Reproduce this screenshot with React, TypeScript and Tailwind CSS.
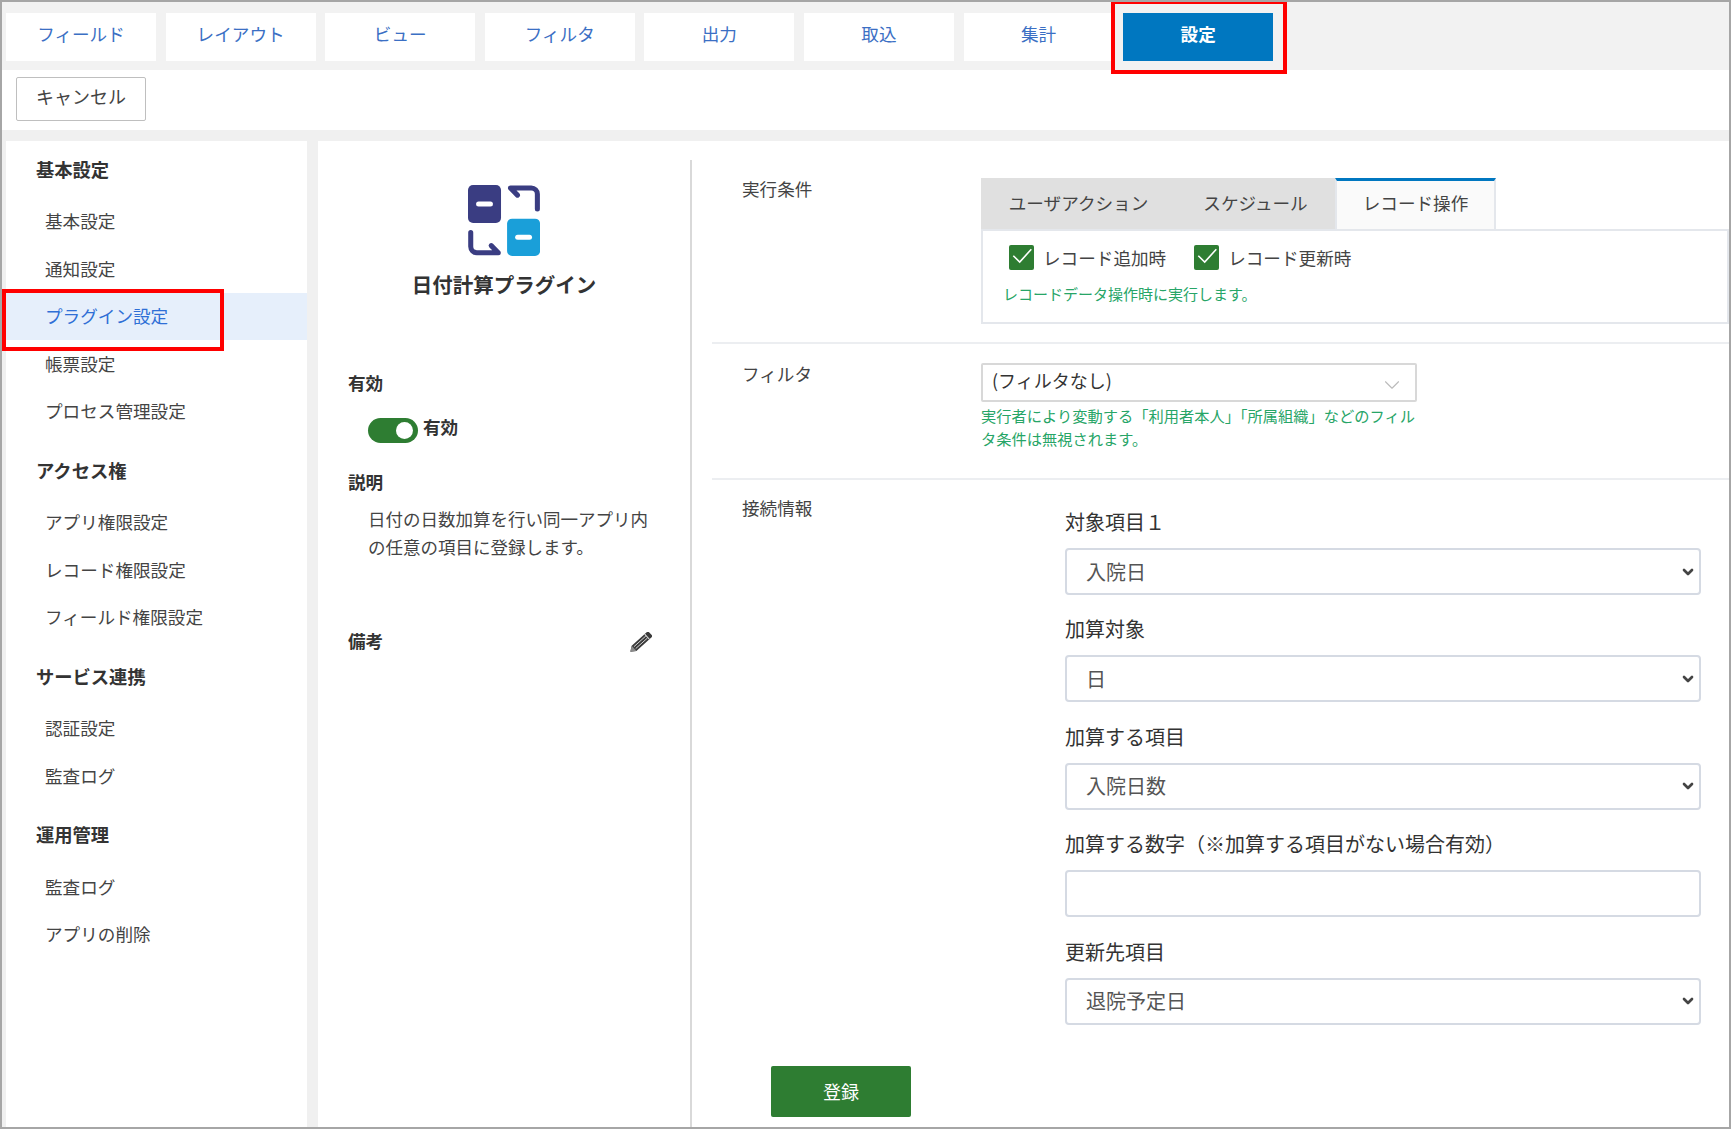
import { ChevronDown } from "lucide-react";

const topTabs = ["フィールド", "レイアウト", "ビュー", "フィルタ", "出力", "取込", "集計"];

const menu = [
  { title: "基本設定", items: ["基本設定", "通知設定", "プラグイン設定", "帳票設定", "プロセス管理設定"] },
  { title: "アクセス権", items: ["アプリ権限設定", "レコード権限設定", "フィールド権限設定"] },
  { title: "サービス連携", items: ["認証設定", "監査ログ"] },
  { title: "運用管理", items: ["監査ログ", "アプリの削除"] },
];

const fields = [
  { label: "対象項目１", value: "入院日" },
  { label: "加算対象", value: "日" },
  { label: "加算する項目", value: "入院日数" },
  { label: "加算する数字（※加算する項目がない場合有効）", value: "" },
  { label: "更新先項目", value: "退院予定日" },
];

function PluginIcon() {
  return (
    <svg viewBox="0 0 71.3 70.3" className="h-[71px] w-[72px]" aria-hidden>
      <rect x="0" y="0" width="32.7" height="37.7" rx="5" fill="#3a3d82" />
      <rect x="8" y="16.3" width="16.7" height="5" rx="2.5" fill="#fff" />
      <rect x="38.7" y="33.3" width="32.7" height="37" rx="5" fill="#1a9fd9" />
      <rect x="46.7" y="49.3" width="16.7" height="5" rx="2.5" fill="#fff" />
      <path d="M68.7 23.7V9a6 6 0 0 0-6-6H42l7 7" fill="none" stroke="#3a3d82" strokeWidth="5" strokeLinecap="round" strokeLinejoin="round" />
      <path d="M2.7 47v14a6 6 0 0 0 6 6H30l-7-7" fill="none" stroke="#3a3d82" strokeWidth="5" strokeLinecap="round" strokeLinejoin="round" />
    </svg>
  );
}

function PencilIcon() {
  return (
    <svg viewBox="0 0 24 22" className="h-[22px] w-[24px]" aria-hidden>
      <g transform="rotate(-42 12 11)">
        <path d="M-1 11 L4 7.5 H24.5 a1.5 1.5 0 0 1 1.5 1.5 V13 a1.5 1.5 0 0 1-1.5 1.5 H4 Z" fill="#3a3a3a" />
        <path d="M-1 11 L4 7.5 V14.5 Z" fill="#8a8a8a" />
        <path d="M5 9.7H21M5 12.3H21" stroke="#d8d8d8" strokeWidth="0.9" />
        <path d="M21.5 7.5V14.5" stroke="#e8e8e8" strokeWidth="1" />
      </g>
    </svg>
  );
}

function CheckItem({ label }: { label: string }) {
  return (
    <div className="flex items-center gap-[9px]">
      <span className="flex size-[25px] items-center justify-center rounded-[2px] bg-[#2e7d32]">
        <svg viewBox="0 0 25 25" className="size-[25px]" aria-hidden>
          <path d="M4.3 10.7L10.7 17L22.3 4.3" fill="none" stroke="#fff" strokeWidth="1.6" />
        </svg>
      </span>
      <span className="text-[17.6px] leading-none text-[#444]">{label}</span>
    </div>
  );
}

function Sidebar() {
  return (
    <aside className="w-[301px] shrink-0 bg-white pt-[4.5px]">
      {menu.map((group) => (
        <div key={group.title} className="mb-[11.5px]">
          <div className="mb-[4px] flex h-[48px] items-center pl-[30px] text-[18.3px] font-bold text-[#333]">
            {group.title}
          </div>
          {group.items.map((item) => (
            <div
              key={item}
              className={
                item === "プラグイン設定"
                  ? "flex h-[47.5px] items-center bg-[#e6effb] pl-[39px] text-[17.6px] text-[#2f6fd6]"
                  : "flex h-[47.5px] items-center pl-[39px] text-[17.6px] text-[#444]"
              }
            >
              {item}
            </div>
          ))}
        </div>
      ))}
    </aside>
  );
}

function PluginInfo() {
  return (
    <section className="mt-[19px] w-[374px] shrink-0 border-r-2 border-[#d9d9d9] text-[#333]">
      <div className="flex flex-col items-center pt-[25px]">
        <PluginIcon />
        <h2 className="mt-[13px] text-[20.5px] leading-[30px] font-bold">日付計算プラグイン</h2>
      </div>
      <div className="mt-[71px] pl-[30px] text-[17.6px] leading-[26px] font-bold">有効</div>
      <div className="mt-[22px] flex items-center pl-[50px]">
        <span className="flex h-[25px] w-[50px] items-center justify-end rounded-full bg-[#2e7d32] pr-[5px]">
          <span className="size-[17px] rounded-full bg-white" />
        </span>
        <span className="mb-[7px] ml-[5px] text-[17.6px] leading-none font-bold">有効</span>
      </div>
      <div className="mt-[26px] pl-[30px] text-[17.6px] leading-[26px] font-bold">説明</div>
      <p className="mt-[10px] ml-[30px] w-[300px] pl-[20px] text-[17.5px] leading-[28px] text-[#444]">
        日付の日数加算を行い同一アプリ内の任意の項目に登録します。
      </p>
      <div className="mt-[67px] flex items-start justify-between pr-[38px] pl-[30px]">
        <span className="text-[17.6px] leading-[26px] font-bold">備考</span>
        <span className="mt-[4px]">
          <PencilIcon />
        </span>
      </div>
    </section>
  );
}

function ExecutionRow() {
  return (
    <div className="ml-[20px] flex border-b-2 border-[#eceef1] pt-[35px] pb-[18px] pl-[30px]">
      <div className="w-[239px] shrink-0 text-[17.6px] leading-[26px] text-[#444]">実行条件</div>
      <div className="flex-1 pt-[2px]">
        <div className="flex h-[51px] text-[17.6px] text-[#444]">
          <div className="flex w-[195px] items-center justify-center bg-[#e0e0e0]">ユーザアクション</div>
          <div className="flex w-[159px] items-center justify-center bg-[#e0e0e0]">スケジュール</div>
          <div className="flex w-[161px] items-center justify-center border-x-2 border-t-[3px] border-x-[#e4e7ec] border-t-[#0077c0] bg-[#fafafa] pb-[3px]">
            レコード操作
          </div>
        </div>
        <div className="h-[95px] border-2 border-[#e4e7ec] pt-[14px] pl-[20px]">
          <div className="flex gap-[28px] pl-[6px]">
            <CheckItem label="レコード追加時" />
            <CheckItem label="レコード更新時" />
          </div>
          <p className="mt-[13px] text-[15px] leading-[22px] text-[#27a567]">レコードデータ操作時に実行します。</p>
        </div>
      </div>
    </div>
  );
}

function FilterRow() {
  return (
    <div className="ml-[20px] flex h-[136px] border-b-2 border-[#eceef1] pt-[17px] pl-[30px]">
      <div className="w-[239px] shrink-0 text-[17.6px] leading-[26px] text-[#444]">フィルタ</div>
      <div className="w-[436px] pt-[2px]">
        <div className="flex h-[39px] items-center justify-between rounded-[2px] border-2 border-[#d8d8d8] pr-[10px] pl-[9px] text-[18px] text-[#333]">
          <span className="mb-[4px]">(フィルタなし)</span>
          <ChevronDown className="mt-[4px] size-[26px] text-[#bbb]" strokeWidth={1} aria-hidden />
        </div>
        <p className="mt-[2px] text-[15.25px] leading-[23px] text-[#27a567]">
          実行者により変動する「利用者本人」「所属組織」などのフィルタ条件は無視されます。
        </p>
      </div>
    </div>
  );
}

function ConnectionRow() {
  return (
    <div className="ml-[20px] pt-[15px] pl-[30px]">
      <div className="flex">
        <div className="w-[323px] shrink-0 text-[17.6px] leading-[26px] text-[#444]">接続情報</div>
        <div className="w-[636px] pt-[10px]">
          {fields.map((field) => (
            <div key={field.label} className="mb-[17.4px]">
              <label className="mb-[9px] block text-[20px] leading-[34px] text-[#333]">{field.label}</label>
              {field.label.startsWith("加算する数字") ? (
                <input
                  className="block h-[47px] w-full rounded-[4px] border-2 border-[#d5dae3] bg-white"
                  aria-label={field.label}
                />
              ) : (
                <div className="flex h-[47px] items-center justify-between rounded-[4px] border-2 border-[#d5dae3] bg-white pr-[3px] pl-[19px] text-[20px] text-[#555]">
                  <span>{field.value}</span>
                  <ChevronDown className="size-[16px] text-[#444]" strokeWidth={4} aria-hidden />
                </div>
              )}
            </div>
          ))}
        </div>
      </div>
      <button className="mt-[24px] ml-[29px] h-[51px] w-[140px] rounded-[2px] bg-[#2e7d32] text-[18px] text-white">
        登録
      </button>
    </div>
  );
}

export default function App() {
  return (
    <div className="relative box-border flex h-[1129px] w-[1731px] flex-col overflow-hidden border-2 border-[#a6a6a6] bg-[#f0f0f0] font-['Noto_Sans_CJK_JP',sans-serif]">
      <nav className="flex h-[68px] shrink-0 gap-[9.6px] bg-[#f2f2f2] pt-[11px] pl-[4px]">
        {topTabs.map((tab) => (
          <div key={tab} className="flex h-[48px] w-[150px] items-center justify-center bg-white pb-[5px] text-[17.6px] text-[#3b6fc4]">
            {tab}
          </div>
        ))}
        <div className="flex h-[48px] w-[150px] items-center justify-center bg-[#0077c0] pb-[5px] text-[17.6px] font-bold text-white">
          設定
        </div>
      </nav>

      <div className="h-[60px] shrink-0 bg-white pt-[7px] pl-[14px]">
        <button className="h-[44px] w-[130px] rounded-[2px] border border-[#bfbfbf] bg-white pb-[6px] text-[18px] text-[#444]">
          キャンセル
        </button>
      </div>

      <div className="flex min-h-0 flex-1 gap-[11px] pt-[11px] pl-[4px]">
        <Sidebar />
        <main className="flex flex-1 bg-white">
          <PluginInfo />
          <div className="flex-1">
            <ExecutionRow />
            <FilterRow />
            <ConnectionRow />
          </div>
        </main>
      </div>

      {/* annotation frames */}
      <div className="absolute top-[-2px] left-[1109px] h-[74px] w-[176px] border-4 border-[#ff0000]" />
      <div className="absolute top-[287px] left-[0px] h-[62px] w-[222px] border-4 border-[#ff0000]" />
    </div>
  );
}
